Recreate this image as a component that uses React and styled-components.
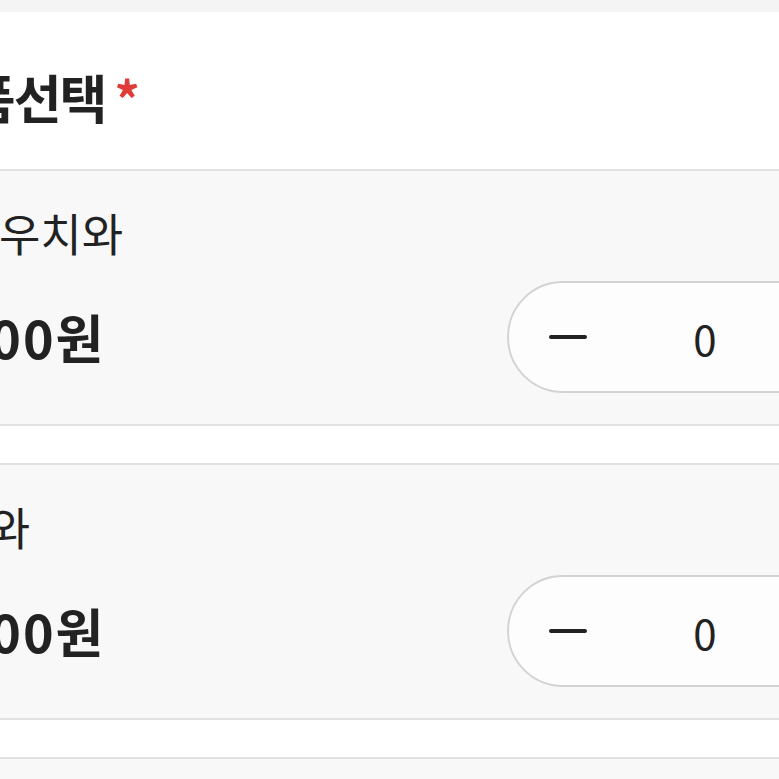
import React from "react"
import styled, { createGlobalStyle } from "styled-components"

const GlobalStyle = createGlobalStyle`
  html, body {
    margin: 0;
    padding: 0;
    background: #f4f4f4;
    overflow: hidden;
  }
  body {
    font-family: "Noto Sans CJK KR", "Noto Sans", sans-serif;
    color: #222;
  }
`

// the screenshot is cropped on the left, so the page starts off-screen
const Page = styled.div`
  width: 1077px;
  margin: 12px 0 0 -134px;
  background: #fff;
`

const Header = styled.div`
  padding: 55px 40px 42px 56px;
`

const Title = styled.h2`
  margin: 0;
  height: 60px;
  font-size: 52px;
  line-height: 60px;
  font-weight: 700;
  letter-spacing: -2px;
  color: #222;
`

const Required = styled.span`
  margin-left: 9px;
  font-size: 50px;
  line-height: 0;
  color: #e03b36;
  font-weight: 700;
`

const List = styled.div`
  display: flex;
  flex-direction: column;
  gap: 37px;
`

const Card = styled.div`
  background: #f8f8f8;
  border-top: 2px solid #e1e1e1;
  border-bottom: 2px solid #e1e1e1;
  padding: 34px 40px 31px 40px;
`

const Name = styled.div`
  font-size: 45px;
  line-height: 56px;
  font-weight: 400;
  margin-bottom: 20px;
`

const Row = styled.div`
  display: flex;
  align-items: center;
  justify-content: space-between;
`

const Price = styled.div`
  font-size: 52px;
  font-weight: 700;
  line-height: 1;
  letter-spacing: 2px;
`

const Stepper = styled.div`
  display: flex;
  align-items: stretch;
  width: 396px;
  height: 112px;
  box-sizing: border-box;
  border: 2px solid #d3d3d3;
  border-radius: 56px;
  background: #fdfdfd;
`

const StepButton = styled.button`
  width: 118px;
  border: none;
  background: transparent;
  display: flex;
  align-items: center;
  justify-content: center;
  padding: 0;
  color: #222;
`

const MinusBar = styled.span`
  display: block;
  width: 38px;
  height: 4px;
  border-radius: 2px;
  background: #222;
`

const PlusMark = styled.span`
  position: relative;
  display: block;
  width: 38px;
  height: 38px;
  &::before,
  &::after {
    content: "";
    position: absolute;
    background: #222;
    border-radius: 2px;
  }
  &::before {
    left: 0;
    top: 17px;
    width: 38px;
    height: 4px;
  }
  &::after {
    top: 0;
    left: 17px;
    width: 4px;
    height: 38px;
  }
`

const Value = styled.div`
  flex: 1;
  display: flex;
  align-items: center;
  justify-content: center;
  font-size: 42px;
  font-weight: 400;
`

const products = [
  { name: "대형 우치와", price: "5,000원" },
  { name: "부채와", price: "5,000원" },
  { name: "미니 우치와", price: "2,000원" },
]

const ProductCard = ({ name, price, count }) => (
  <Card>
    <Name>{name}</Name>
    <Row>
      <Price>{price}</Price>
      <Stepper>
        <StepButton aria-label="minus">
          <MinusBar />
        </StepButton>
        <Value>{count}</Value>
        <StepButton aria-label="plus">
          <PlusMark />
        </StepButton>
      </Stepper>
    </Row>
  </Card>
)

export default function App() {
  return (
    <>
      <GlobalStyle />
      <Page>
        <Header>
          <Title>
            상품선택<Required>*</Required>
          </Title>
        </Header>
        <List>
          {products.map((p) => (
            <ProductCard key={p.name} name={p.name} price={p.price} count={0} />
          ))}
        </List>
      </Page>
    </>
  )
}
